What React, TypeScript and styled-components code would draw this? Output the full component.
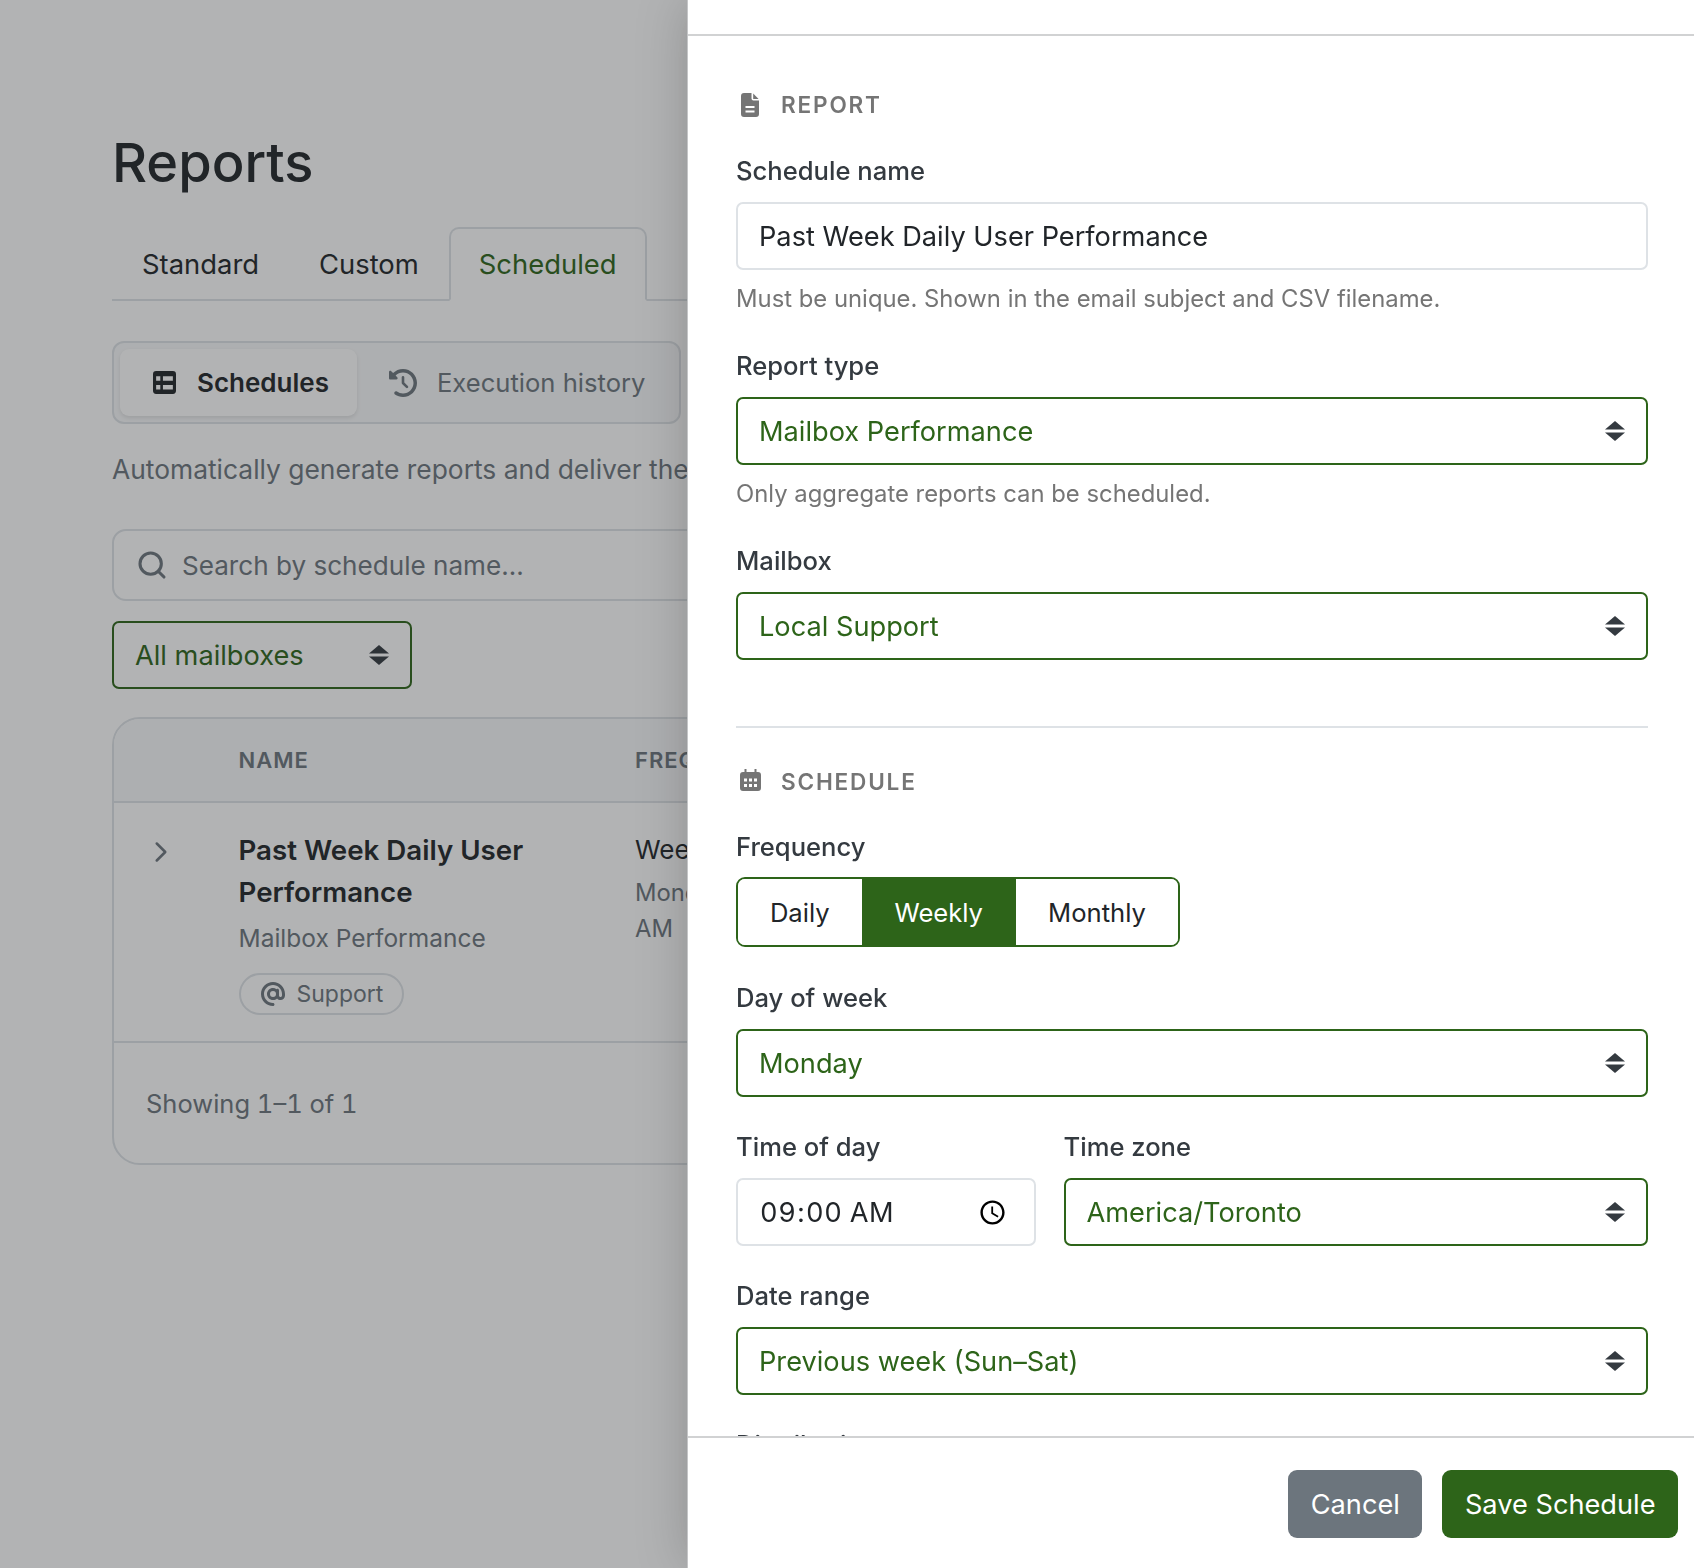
import React from "react";
import styled, { createGlobalStyle } from "styled-components";
import { ChevronRight, Search } from "lucide-react";
import { FaAt, FaClockRotateLeft } from "react-icons/fa6";

const green = "#2d6419";
const dark = "#212529";
const muted = "#6c757d";
const line = "#dee2e6";

const GlobalStyle = createGlobalStyle`
  html, body {
    margin: 0;
    padding: 0;
    background: #fff;
    overflow: hidden;
  }
  * {
    box-sizing: border-box;
  }
  body {
    font-family: Inter, "Liberation Sans", sans-serif;
    color: ${dark};
  }
`;

const Page = styled.main`
  width: 1694px;
  height: 1568px;
  padding: 127px 112px 0;
  overflow: hidden;
`;

const Title = styled.h1`
  margin: 0 0 29px;
  font-size: 54.2px;
  line-height: 71px;
  font-weight: 500;
`;

const Tabs = styled.nav`
  display: flex;
  height: 74px;
  border-bottom: 2px solid ${line};
`;

const Tab = styled.div<{ $active?: boolean }>`
  height: 74px;
  padding: 0 28px;
  display: flex;
  align-items: center;
  font-size: 27.4px;
  border: 2px solid ${(p) => (p.$active ? line : "transparent")};
  border-bottom-color: ${(p) => (p.$active ? "#fff" : "transparent")};
  border-radius: 10px 10px 0 0;
  color: ${(p) => (p.$active ? green : dark)};
  background: ${(p) => (p.$active ? "#fff" : "transparent")};
`;

const ViewSwitch = styled.div`
  display: inline-flex;
  height: 83px;
  margin-top: 40px;
  padding: 6px;
  border: 2px solid ${line};
  border-radius: 12px;
  background: #f8f9fa;
`;

const ViewButton = styled.div<{ $active?: boolean }>`
  display: flex;
  align-items: center;
  gap: ${(p) => (p.$active ? 21 : 20)}px;
  padding: 0 28px 0 ${(p) => (p.$active ? 33 : 32)}px;
  border-radius: 9px;
  font-size: ${(p) => (p.$active ? 26 : 25.6)}px;
  font-weight: ${(p) => (p.$active ? 600 : 400)};
  color: ${(p) => (p.$active ? dark : muted)};
  background: ${(p) => (p.$active ? "#fff" : "transparent")};
  box-shadow: ${(p) => (p.$active ? "0 2px 4px rgba(0,0,0,.1)" : "none")};
`;

const Intro = styled.p`
  margin: 27px 0 0;
  font-size: 26.4px;
  line-height: 36px;
  color: ${muted};
  white-space: nowrap;
`;

const SearchBox = styled.div`
  display: flex;
  align-items: center;
  gap: 14px;
  height: 72px;
  margin-top: 42px;
  padding: 0 22px;
  border: 2px solid ${line};
  border-radius: 14px;
  color: ${muted};
`;

const SearchInput = styled.input`
  flex: 1;
  border: 0;
  outline: 0;
  padding: 0;
  font: 400 26.1px Inter, sans-serif;
  background: transparent;

  &::placeholder {
    color: ${muted};
    opacity: 1;
  }
`;

const FilterRow = styled.div`
  display: flex;
  margin-top: 20px;
`;

const Select = styled.div<{ $width?: string }>`
  display: flex;
  align-items: center;
  justify-content: space-between;
  width: ${(p) => p.$width ?? "100%"};
  height: 68px;
  padding: 1px 21px 0 21px;
  border: 2px solid ${green};
  border-radius: 7px;
  font-size: 27.2px;
  color: ${green};
  background: #fff;

  svg {
    margin-top: -1px;
  }
`;

const Card = styled.section`
  margin-top: 28px;
  border: 2px solid ${line};
  border-radius: 28px;
  background: #fff;
  overflow: hidden;
`;

const Row = styled.div`
  display: grid;
  grid-template-columns: 124.5px 396.5px 1fr;
`;

const HeaderRow = styled(Row)`
  align-items: center;
  height: 84px;
  border-bottom: 2px solid ${line};
  background: #f8f9fa;
  font-size: 22px;
  font-weight: 600;
  letter-spacing: 1px;
  color: ${muted};
`;

const BodyRow = styled(Row)`
  height: 240px;
  padding-top: 26px;
  border-bottom: 2px solid ${line};
`;

const Chevron = styled.div`
  padding: 6px 0 0 30px;
  color: ${muted};
`;

const ScheduleName = styled.div`
  font-size: 27.7px;
  line-height: 42px;
  font-weight: 600;
  width: 340px;
`;

const Sub = styled.div`
  margin-top: 7px;
  font-size: 24.5px;
  line-height: 36px;
  color: ${muted};
`;

const Pill = styled.span`
  display: inline-flex;
  align-items: center;
  gap: 12px;
  height: 42px;
  margin-top: 17px;
  padding: 0 19px 0 20px;
  border: 2px solid ${line};
  border-radius: 21px;
  font-size: 23px;
  color: ${muted};
`;

const FreqMain = styled.div`
  font-size: 26px;
  line-height: 42px;
`;

const FreqSub = styled.div`
  width: 190px;
  margin-top: 4px;
  font-size: 23.8px;
  line-height: 36px;
  color: ${muted};
`;

const CardFooter = styled.div`
  padding: 43px 32px;
  height: 120px;
  font-size: 25.5px;
  line-height: 36px;
  font-feature-settings: "tnum";
  color: ${muted};
`;

const Backdrop = styled.div`
  position: fixed;
  inset: 0;
  background: rgba(33, 37, 41, 0.35);
`;

const Drawer = styled.aside`
  position: fixed;
  top: 0;
  right: 0;
  bottom: 0;
  width: 1007px;
  display: flex;
  flex-direction: column;
  background: #fff;
  border-left: 1px solid #c4c5c7;
  box-shadow: 0 0 50px rgba(0, 0, 0, 0.2);
`;

const DrawerHead = styled.div`
  flex: none;
  height: 36px;
  border-bottom: 2px solid #d1d2d3;
`;

const DrawerBody = styled.div`
  flex: 1;
  min-height: 0;
  overflow: hidden;
  padding: 51px 46px 0 48px;
`;

const DrawerFoot = styled.div`
  flex: none;
  display: flex;
  justify-content: flex-end;
  align-items: flex-start;
  gap: 20px;
  height: 132px;
  padding: 32px 16px 0 0;
  border-top: 2px solid #d1d2d3;
`;

const SectionTitle = styled.h2`
  display: flex;
  align-items: center;
  gap: 20px;
  height: 36px;
  margin: 0 0 29.5px;
  padding: 0 0 1px 3px;
  font-size: 22.6px;
  font-weight: 600;
  letter-spacing: 1.8px;
  text-transform: uppercase;
  color: #757575;
`;

const SectionIcon = styled.span<{ $lift?: number }>`
  display: flex;
  justify-content: center;
  width: 22px;
  margin-top: ${(p) => -(p.$lift ?? 0)}px;
`;

const Field = styled.div<{ $grow?: boolean; $width?: number; $gap?: number }>`
  margin-bottom: ${(p) => p.$gap ?? 32}px;
  min-width: 0;
  flex: ${(p) => (p.$grow ? 1 : "none")};
  width: ${(p) => (p.$width ? `${p.$width}px` : "auto")};
`;

const Label = styled.label`
  display: block;
  height: 36px;
  margin-bottom: 13px;
  font-size: 25.6px;
  line-height: 36px;
  font-weight: 500;
  color: #343a40;
`;

const textField = `
  display: block;
  width: 100%;
  height: 68px;
  padding: 1px 21px 0;
  border: 2px solid ${line};
  border-radius: 7px;
  outline: 0;
  font: 400 27.2px Inter, sans-serif;
  color: ${dark};
  background: #fff;
`;

const TextInput = styled.input`
  ${textField}
`;

const TimeInput = styled.input`
  ${textField}
  padding-right: 24px;
  font-feature-settings: "tnum";
  letter-spacing: 0.5px;
`;

const Help = styled.div`
  margin: 11px 0 -1px;
  font-size: 23.85px;
  line-height: 36px;
  color: #757575;
`;

const Divider = styled.hr`
  margin: 66px 0 36px;
  border: 0;
  border-top: 2px solid ${line};
`;

const Segments = styled.div`
  display: inline-flex;
  height: 70px;
  margin-top: -1px;
  border: 2px solid ${green};
  border-radius: 9px;
  overflow: hidden;
`;

const Segment = styled.div<{ $active?: boolean; $width: number }>`
  display: flex;
  align-items: center;
  justify-content: center;
  width: ${(p) => p.$width}px;
  font-size: 25.6px;
  color: ${(p) => (p.$active ? "#fff" : dark)};
  background: ${(p) => (p.$active ? green : "#fff")};
`;

const TimeRow = styled.div`
  display: flex;
  gap: 28px;
`;

const Button = styled.button<{ $primary?: boolean }>`
  height: 68px;
  padding: 0 22.5px;
  border: 0;
  border-radius: 9px;
  font: 400 27.2px Inter, sans-serif;
  color: #fff;
  background: ${(p) => (p.$primary ? green : muted)};
`;

const SortArrows: React.FC = () => (
  <svg width="20" height="20" viewBox="0 0 20 20" fill="#343a40">
    <polygon points="10,0 20,8.5 0,8.5" />
    <polygon points="0,11.5 20,11.5 10,20" />
  </svg>
);

const TableIcon: React.FC = () => (
  <svg width="23" height="23" viewBox="0 0 22 22" fill="currentColor" fillRule="evenodd">
    <path d="M3 0h16a3 3 0 0 1 3 3v16a3 3 0 0 1-3 3H3a3 3 0 0 1-3-3V3a3 3 0 0 1 3-3zM3 5v4.3h4V5zM9.5 5v4.3H19V5zM3 13.3v4.4h4v-4.4zM9.5 13.3v4.4H19v-4.4z" />
  </svg>
);

const FileIcon: React.FC = () => (
  <svg width="18" height="24" viewBox="0 0 18 24" fill="currentColor">
    <path d="M3 0h7.5v5.5a2 2 0 0 0 2 2H18V21a3 3 0 0 1-3 3H3a3 3 0 0 1-3-3V3a3 3 0 0 1 3-3z" />
    <path d="M12.2 0.4 17.6 5.9h-5.4z" />
    <path fill="#fff" d="M4.5 13h9v2h-9zM4.5 17.5h9v2h-9z" />
  </svg>
);

const CalendarIcon: React.FC = () => (
  <svg width="21" height="22" viewBox="0 0 21 22" fill="currentColor">
    <path d="M4.5 0h2v3h8V0h2v3H18a3 3 0 0 1 3 3v13a3 3 0 0 1-3 3H3a3 3 0 0 1-3-3V6a3 3 0 0 1 3-3h1.5z" />
    <path
      fill="#fff"
      d="M4 9.5h3v3H4zM9 9.5h3v3H9zM14 9.5h3v3h-3zM4 15h3v3H4zM9 15h3v3H9zM14 15h3v3h-3z"
    />
  </svg>
);

const App: React.FC = () => (
  <>
    <GlobalStyle />
    <Page>
      <Title>Reports</Title>
      <Tabs>
        <Tab>Standard</Tab>
        <Tab>Custom</Tab>
        <Tab $active>Scheduled</Tab>
      </Tabs>
      <ViewSwitch>
        <ViewButton $active>
          <TableIcon />
          Schedules
        </ViewButton>
        <ViewButton>
          <FaClockRotateLeft size={28} />
          Execution history
        </ViewButton>
      </ViewSwitch>
      <Intro>
        Automatically generate reports and deliver them by email on a recurring
        schedule.
      </Intro>
      <SearchBox>
        <Search size={32} strokeWidth={2.3} />
        <SearchInput placeholder="Search by schedule name..." readOnly />
      </SearchBox>
      <FilterRow>
        <Select $width="300px">
          All mailboxes
          <SortArrows />
        </Select>
      </FilterRow>
      <Card>
        <HeaderRow>
          <div />
          <div>NAME</div>
          <div>FREQUENCY</div>
        </HeaderRow>
        <BodyRow>
          <Chevron>
            <ChevronRight size={34} strokeWidth={1.8} />
          </Chevron>
          <div>
            <ScheduleName>Past Week Daily User Performance</ScheduleName>
            <Sub>Mailbox Performance</Sub>
            <Pill>
              <FaAt size={24} />
              Support
            </Pill>
          </div>
          <div>
            <FreqMain>Weekly</FreqMain>
            <FreqSub>Mondays at 9:00 AM</FreqSub>
          </div>
        </BodyRow>
        <CardFooter>Showing 1–1 of 1</CardFooter>
      </Card>
    </Page>
    <Backdrop />
    <Drawer>
      <DrawerHead />
      <DrawerBody>
        <SectionTitle>
          <SectionIcon>
            <FileIcon />
          </SectionIcon>
          Report
        </SectionTitle>
        <Field>
          <Label>Schedule name</Label>
          <TextInput defaultValue="Past Week Daily User Performance" />
          <Help>Must be unique. Shown in the email subject and CSV filename.</Help>
        </Field>
        <Field>
          <Label>Report type</Label>
          <Select>
            Mailbox Performance
            <SortArrows />
          </Select>
          <Help>Only aggregate reports can be scheduled.</Help>
        </Field>
        <Field>
          <Label>Mailbox</Label>
          <Select>
            Local Support
            <SortArrows />
          </Select>
        </Field>
        <Divider />
        <SectionTitle>
          <SectionIcon $lift={3}>
            <CalendarIcon />
          </SectionIcon>
          Schedule
        </SectionTitle>
        <Field $gap={33}>
          <Label>Frequency</Label>
          <Segments>
            <Segment $width={123.5}>Daily</Segment>
            <Segment $width={154.5} $active>
              Weekly
            </Segment>
            <Segment $width={162}>Monthly</Segment>
          </Segments>
        </Field>
        <Field>
          <Label>Day of week</Label>
          <Select>
            Monday
            <SortArrows />
          </Select>
        </Field>
        <TimeRow>
          <Field $width={299.5}>
            <Label>Time of day</Label>
            <TimeInput type="time" defaultValue="09:00" />
          </Field>
          <Field $grow>
            <Label>Time zone</Label>
            <Select>
              America/Toronto
              <SortArrows />
            </Select>
          </Field>
        </TimeRow>
        <Field>
          <Label>Date range</Label>
          <Select>
            Previous week (Sun–Sat)
            <SortArrows />
          </Select>
        </Field>
        <Field>
          <Label>Distribution</Label>
        </Field>
      </DrawerBody>
      <DrawerFoot>
        <Button>Cancel</Button>
        <Button $primary>Save Schedule</Button>
      </DrawerFoot>
    </Drawer>
  </>
);

export default App;
